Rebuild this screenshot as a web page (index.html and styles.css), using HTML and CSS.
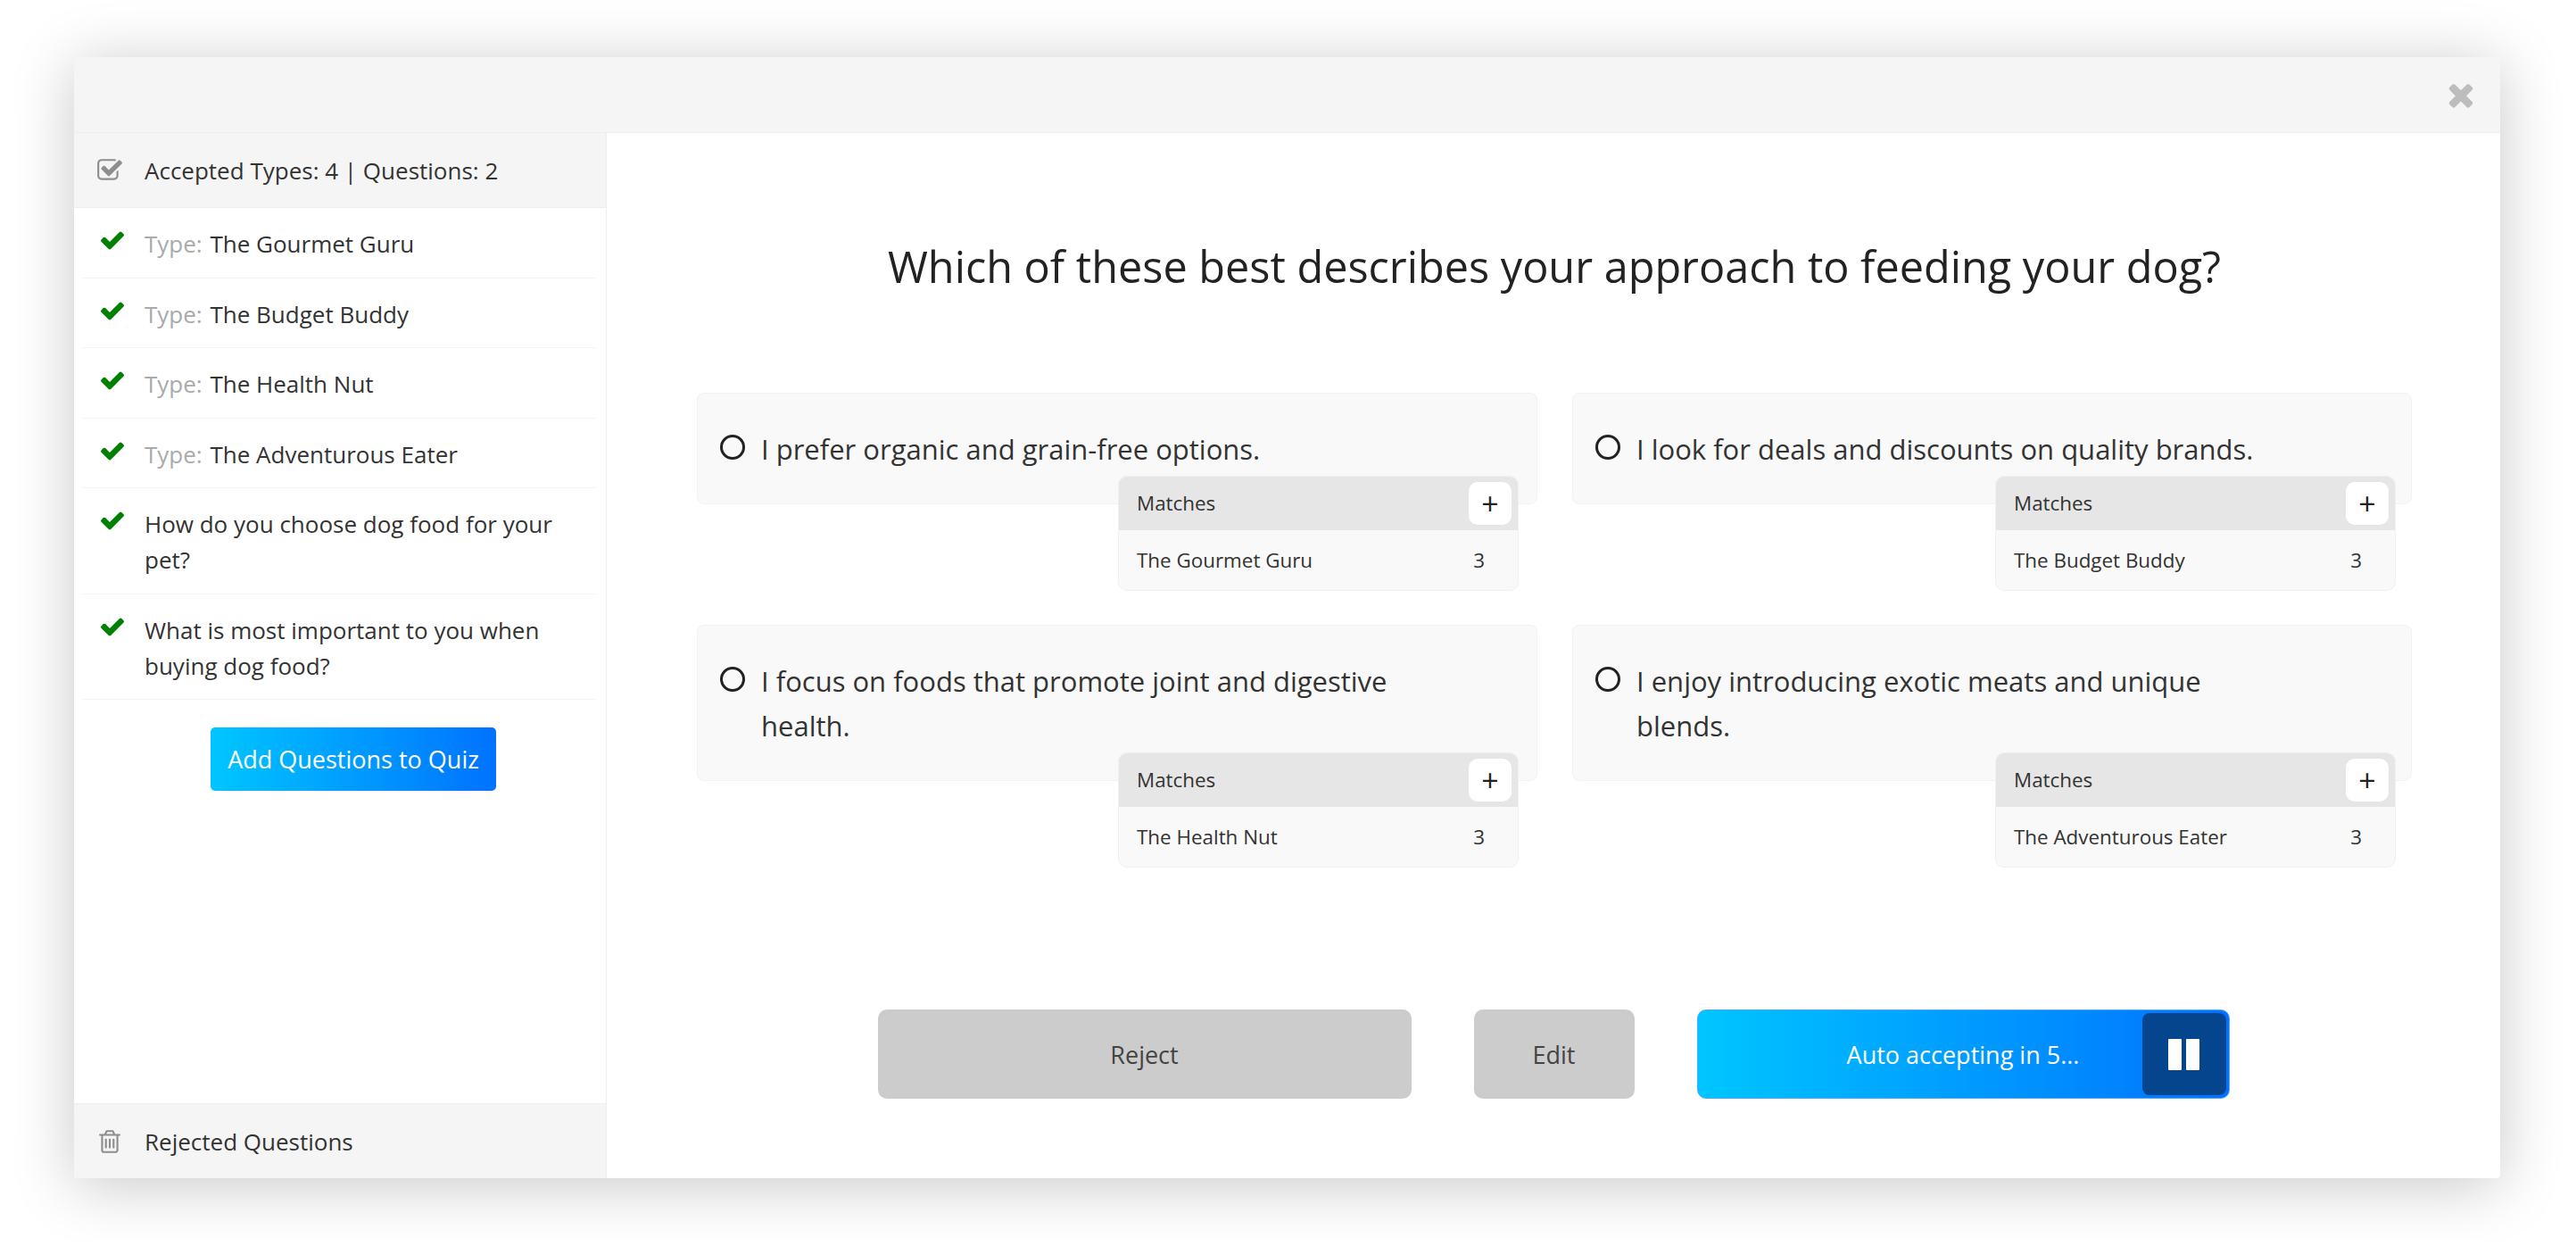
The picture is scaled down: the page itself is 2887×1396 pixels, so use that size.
FILE: index.html
```html
<!DOCTYPE html>
<html lang="en">
<head>
    <meta charset="UTF-8">
    <meta name="viewport" content="width=device-width, initial-scale=1.0">
    <title>Quiz Builder</title>
    <link rel="stylesheet" href="styles.css">
</head>
<body>

<svg class="sprite" xmlns="http://www.w3.org/2000/svg">
    <symbol id="i-check" viewBox="0 0 1792 1792"><path d="M1671 566q0 40-28 68l-724 724-136 136q-28 28-68 28t-68-28l-136-136-362-362q-28-28-28-68t28-68l136-136q28-28 68-28t68 28l294 295 656-657q28-28 68-28t68 28l136 136q28 28 28 68z"/></symbol>
    <symbol id="i-close" viewBox="0 0 1792 1792"><path d="M1490 1322q0 40-28 68l-136 136q-28 28-68 28t-68-28l-294-294-294 294q-28 28-68 28t-68-28l-136-136q-28-28-28-68t28-68l294-294-294-294q-28-28-28-68t28-68l136-136q28-28 68-28t68 28l294 294 294-294q28-28 68-28t68 28l136 136q28 28 28 68t-28 68l-294 294 294 294q28 28 28 68z"/></symbol>
    <symbol id="i-square" viewBox="0 0 1792 1792"><path d="M1472 930v318q0 119-84.5 203.5t-203.5 84.5h-832q-119 0-203.5-84.5t-84.5-203.5v-832q0-119 84.5-203.5t203.5-84.5h832q63 0 117 25 15 7 18 23 3 17-9 29l-49 49q-10 10-23 10-3 0-9-2-23-6-45-6h-832q-66 0-113 47t-47 113v832q0 66 47 113t113 47h832q66 0 113-47t47-113v-254q0-13 9-22l64-64q10-10 23-10 6 0 12 3 20 8 20 29zm231-489l-814 814q-24 24-57 24t-57-24l-430-430q-24-24-24-57t24-57l110-110q24-24 57-24t57 24l263 263 647-647q24-24 57-24t57 24l110 110q24 24 24 57t-24 57z"/></symbol>
    <symbol id="i-trash" viewBox="0 0 1792 1792"><path d="M704 736v576q0 14-9 23t-23 9h-64q-14 0-23-9t-9-23v-576q0-14 9-23t23-9h64q14 0 23 9t9 23zm256 0v576q0 14-9 23t-23 9h-64q-14 0-23-9t-9-23v-576q0-14 9-23t23-9h64q14 0 23 9t9 23zm256 0v576q0 14-9 23t-23 9h-64q-14 0-23-9t-9-23v-576q0-14 9-23t23-9h64q14 0 23 9t9 23zm128 724v-948h-896v948q0 22 7 40.5t14.5 27 10.5 8.5h832q3 0 10.5-8.5t14.5-27 7-40.5zm-672-1076h448l-48-117q-7-9-17-11h-317q-10 2-17 11zm928 32v64q0 14-9 23t-23 9h-96v948q0 83-47 143.5t-113 60.5h-832q-66 0-113-58.5t-47-141.5v-952h-96q-14 0-23-9t-9-23v-64q0-14 9-23t23-9h309l70-167q15-37 54-63t79-26h320q40 0 79 26t54 63l70 167h309q14 0 23 9t9 23z"/></symbol>
</svg>

<div class="modal">
    <div class="modal-header">
        <svg class="close-icon"><use href="#i-close"/></svg>
    </div>

    <div class="modal-body">
        <aside class="sidebar">
            <div class="side-bar-title">
                <svg class="side-icon"><use href="#i-square"/></svg>
                <span>Accepted Types: 4 | Questions: 2</span>
            </div>

            <ul class="accepted-list">
                <li><svg class="check-icon"><use href="#i-check"/></svg><span><span class="type-label">Type:</span> The Gourmet Guru</span></li>
                <li><svg class="check-icon"><use href="#i-check"/></svg><span><span class="type-label">Type:</span> The Budget Buddy</span></li>
                <li><svg class="check-icon"><use href="#i-check"/></svg><span><span class="type-label">Type:</span> The Health Nut</span></li>
                <li><svg class="check-icon"><use href="#i-check"/></svg><span><span class="type-label">Type:</span> The Adventurous Eater</span></li>
                <li><svg class="check-icon"><use href="#i-check"/></svg><span>How do you choose dog food for your pet?</span></li>
                <li><svg class="check-icon"><use href="#i-check"/></svg><span>What is most important to you when buying dog food?</span></li>
            </ul>

            <div class="add-wrap">
                <button class="add-btn">Add Questions to Quiz</button>
            </div>

            <div class="side-bar-title side-bar-foot">
                <svg class="side-icon"><use href="#i-trash"/></svg>
                <span>Rejected Questions</span>
            </div>
        </aside>

        <main class="question-pane">
            <h1 class="question">Which of these best describes your approach to feeding your dog?</h1>

            <div class="options">
                <div class="option">
                    <span class="radio"></span>
                    <span class="option-text">I prefer organic and grain-free options.</span>
                    <div class="matches">
                        <div class="matches-head"><span>Matches</span><button class="plus-btn">+</button></div>
                        <div class="matches-row"><span>The Gourmet Guru</span><span class="score">3</span></div>
                    </div>
                </div>
                <div class="option">
                    <span class="radio"></span>
                    <span class="option-text">I look for deals and discounts on quality brands.</span>
                    <div class="matches">
                        <div class="matches-head"><span>Matches</span><button class="plus-btn">+</button></div>
                        <div class="matches-row"><span>The Budget Buddy</span><span class="score">3</span></div>
                    </div>
                </div>
                <div class="option">
                    <span class="radio"></span>
                    <span class="option-text">I focus on foods that promote joint and digestive health.</span>
                    <div class="matches">
                        <div class="matches-head"><span>Matches</span><button class="plus-btn">+</button></div>
                        <div class="matches-row"><span>The Health Nut</span><span class="score">3</span></div>
                    </div>
                </div>
                <div class="option">
                    <span class="radio"></span>
                    <span class="option-text">I enjoy introducing exotic meats and unique blends.</span>
                    <div class="matches">
                        <div class="matches-head"><span>Matches</span><button class="plus-btn">+</button></div>
                        <div class="matches-row"><span>The Adventurous Eater</span><span class="score">3</span></div>
                    </div>
                </div>
            </div>

            <div class="actions">
                <button class="action-btn reject-btn">Reject</button>
                <button class="action-btn edit-btn">Edit</button>
                <div class="action-btn accept-btn">
                    <span class="accept-label">Auto accepting in 5...</span>
                    <span class="pause-btn"><i></i><i></i></span>
                </div>
            </div>
        </main>
    </div>
</div>

</body>
</html>
```

FILE: styles.css
```css
body {
    margin: 0;
    padding: 64px 85px 70px 83px;
    background: #fff;
    font-family: "Open Sans", Arial, sans-serif;
    color: #333;
}

.sprite { display: none; }

button { font-family: inherit; }

.modal {
    height: 1256px;
    display: flex;
    flex-direction: column;
    border-radius: 4px;
    box-shadow: 0 8px 70px rgba(0, 0, 0, 0.22);
    background: #fff;
}

.modal-header {
    height: 84px;
    flex: none;
    display: flex;
    justify-content: flex-end;
    align-items: center;
    padding-right: 24px;
    background: #f5f5f5;
    border-bottom: 1px solid #eee;
    border-radius: 4px 4px 0 0;
}

.close-icon { width: 40px; height: 40px; fill: #bdbdbd; }

.modal-body { flex: 1; display: flex; min-height: 0; }

.sidebar {
    width: 597px;
    flex: none;
    display: flex;
    flex-direction: column;
    border-right: 1px solid #eee;
    box-sizing: border-box;
}

.side-bar-title {
    height: 83px;
    flex: none;
    display: flex;
    align-items: center;
    padding-left: 25px;
    background: #f5f5f5;
    border-bottom: 1px solid #eee;
    font-size: 26px;
}

.side-bar-foot {
    margin-top: auto;
    height: 83px;
    border-bottom: none;
    border-top: 1px solid #eee;
}

.side-icon { width: 30px; height: 30px; fill: #8e8e8e; margin-right: 24px; flex: none; }

.accepted-list { list-style: none; margin: 0 12px 0 10px; padding: 0; }

.accepted-list li {
    display: flex;
    align-items: flex-start;
    padding: 20px 20px 17.5px 18px;
    border-bottom: 1px solid #f3f3f3;
    font-size: 26px;
    line-height: 40px;
}

.check-icon { width: 30px; height: 30px; fill: #008000; margin: 1px 21px 0 0; flex: none; }

.type-label { color: #aaa; margin-right: 2px; }

.add-wrap { padding: 31px 0 0 30px; text-align: center; }

.add-btn {
    width: 320px;
    height: 71px;
    padding: 0;
    border: none;
    border-radius: 5px;
    background: linear-gradient(to right, #00c6ff, #0072ff);
    color: #fff;
    font-size: 27px;
}

.question-pane { flex: 1; padding: 0 99px 0 101px; }

.question {
    margin: 116px 0 109px;
    font-size: 48.6px;
    line-height: 66px;
    font-weight: 400;
    text-align: center;
    color: #222;
}

.options {
    display: grid;
    grid-template-columns: 942px 941px;
    column-gap: 39px;
    row-gap: 135px;
}

.option {
    position: relative;
    display: flex;
    align-items: flex-start;
    padding: 37px 0 36px 25px;
    background: #f9f9f9;
    border: 1px solid #f2f2f2;
    border-radius: 8px;
    box-sizing: border-box;
    font-size: 31px;
    line-height: 50px;
}

.radio {
    width: 28px;
    height: 28px;
    flex: none;
    margin: 9px 18px 0 0;
    border: 3px solid #222;
    border-radius: 50%;
    box-sizing: border-box;
}

.option-text { max-width: 712px; }

/* sits over the bottom edge of the option card */
.matches {
    position: absolute;
    right: 20px;
    bottom: -98px;
    width: 449px;
    height: 129px;
    background: #f9f9f9;
    border: 1px solid #f0f0f0;
    border-radius: 10px;
    box-sizing: border-box;
    overflow: hidden;
    font-size: 22.4px;
    line-height: 30px;
}

.option:nth-child(even) .matches { right: 17px; }

.matches-head {
    height: 60px;
    display: flex;
    align-items: center;
    justify-content: space-between;
    padding: 0 7px 0 20px;
    background: #e6e6e6;
}

.plus-btn {
    width: 48px;
    height: 48px;
    padding: 0;
    border: none;
    border-radius: 10px;
    background: #fff;
    color: #222;
    font-size: 34px;
    line-height: 44px;
}

.matches-row {
    display: flex;
    justify-content: space-between;
    padding: 19px 37px 0 20px;
}

.actions {
    display: flex;
    justify-content: center;
    gap: 70px;
    margin-top: 256px;
    padding-right: 2px;
}

.action-btn {
    height: 100px;
    border: none;
    border-radius: 10px;
    box-sizing: border-box;
    font-size: 27px;
}

.reject-btn { width: 598px; background: #ccc; color: #444; }
.edit-btn { width: 180px; background: #ccc; color: #444; }

.accept-btn {
    width: 597px;
    display: flex;
    align-items: center;
    padding: 3px;
    border: 1px solid #4da6ff;
    background: linear-gradient(to right, #00c6ff, #0072ff);
    color: #fff;
}

.accept-label { flex: 1; text-align: center; padding-left: 94px; }

.pause-btn {
    width: 94px;
    height: 92px;
    display: flex;
    justify-content: center;
    align-items: center;
    gap: 5px;
    border-radius: 8px;
    background: #04458e;
}

.pause-btn i { width: 15px; height: 35px; background: #fff; border-radius: 1px; }
```
